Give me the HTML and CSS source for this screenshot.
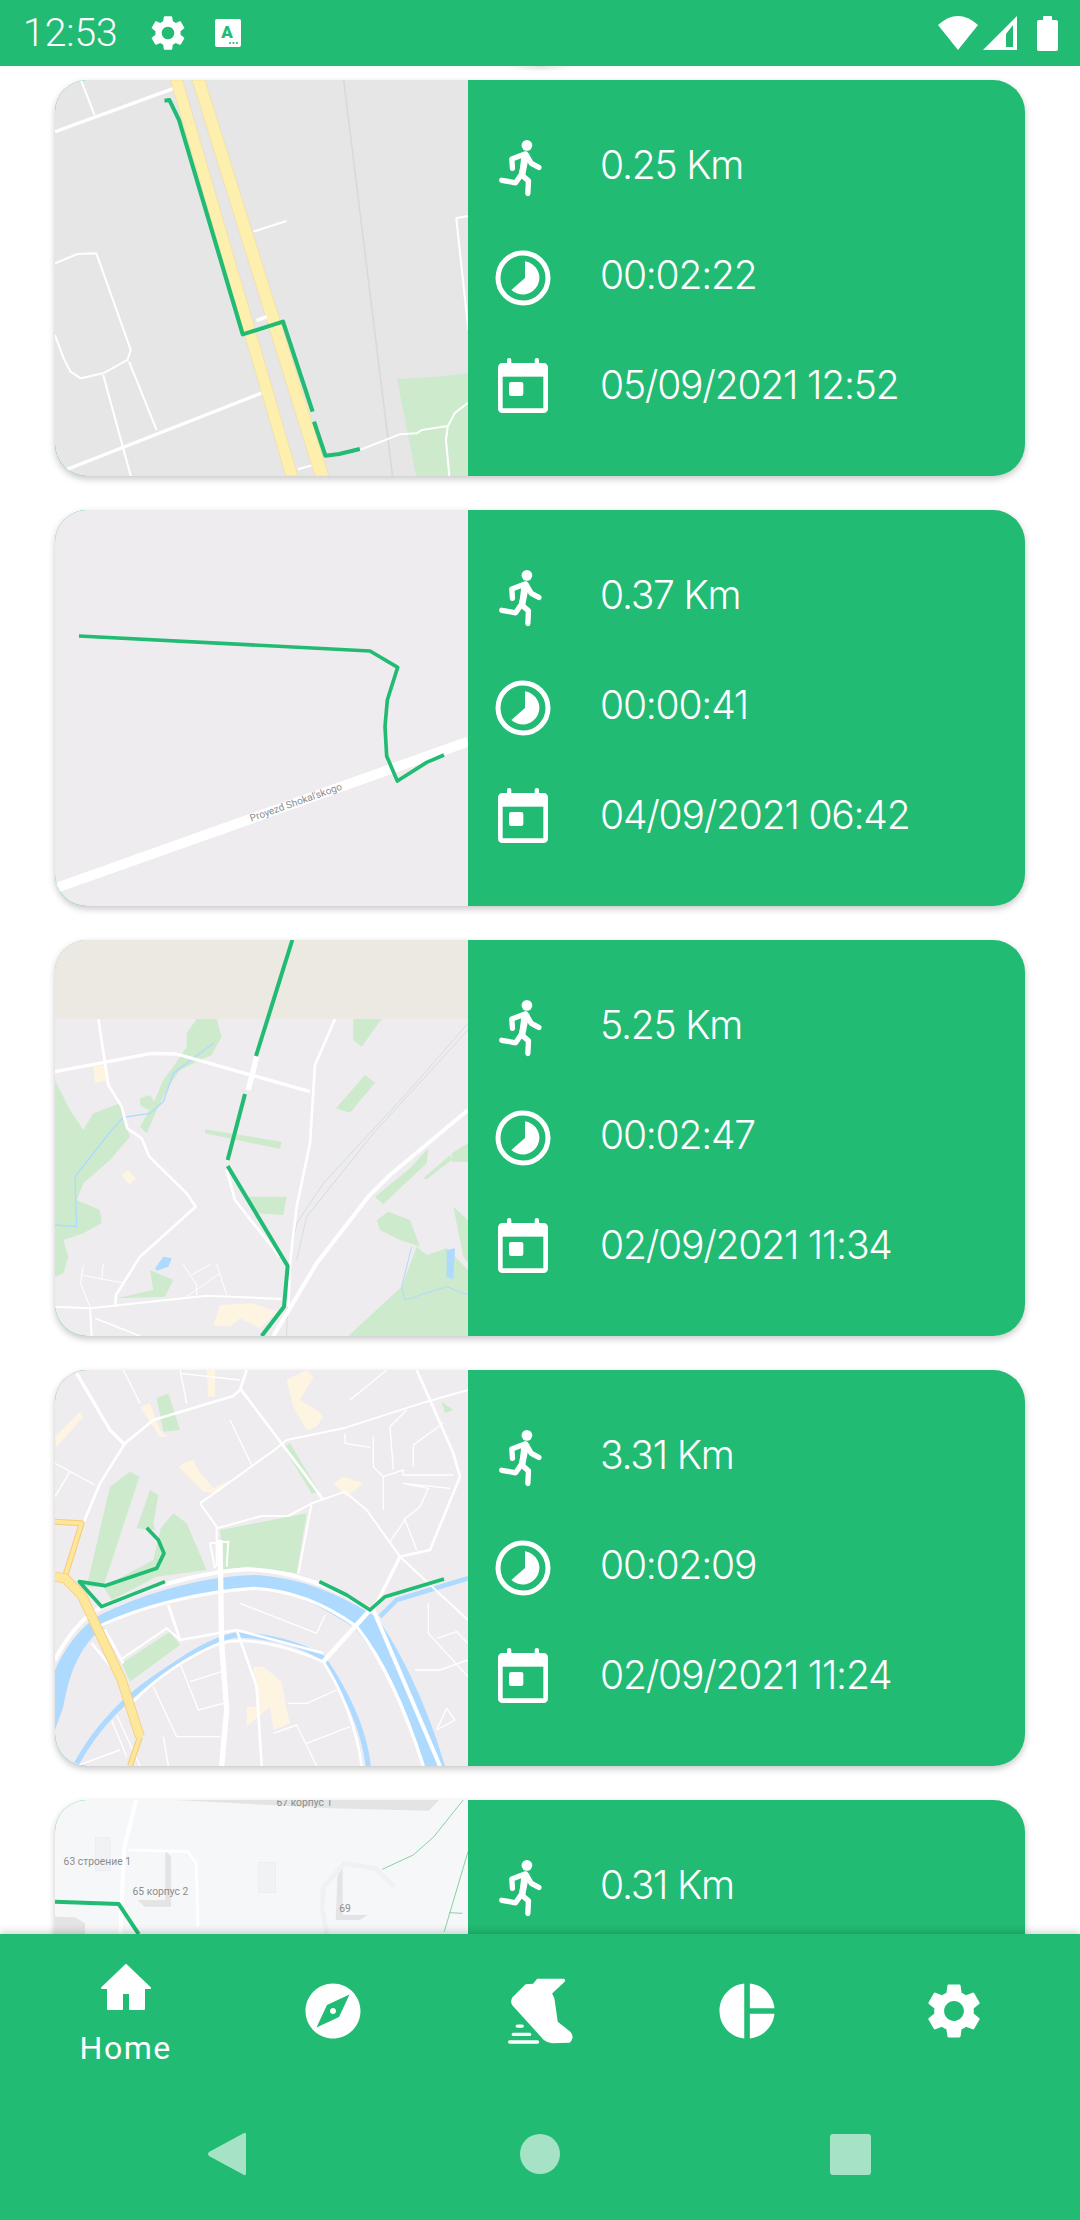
FILE: index.html
```html
<!DOCTYPE html>
<html>

<head>
    <meta charset="UTF-8">
    <title>Runs</title>
    <link rel="stylesheet" href="styles.css">
</head>

<body>
    <svg class="sprite" width="0" height="0">
        <symbol id="i-run" viewBox="50 50 140 190">
            <circle cx="142" cy="73" r="17" fill="#fff" />
            <path d="M96 146 L94 116 L138 100 L156 130 L180 143 M138 104 L124 166 L147 186 L145 226 M124 166 L106 192 L62 184" fill="none" stroke="#fff" stroke-width="17" stroke-linecap="round" stroke-linejoin="round" />
            <path d="M125 100 L150 100 L136 172 L118 165 Z" fill="#fff" />
        </symbol>
        <symbol id="i-clock" viewBox="0 0 168 168">
            <circle cx="84" cy="84" r="75" fill="none" stroke="#fff" stroke-width="15" />
            <path d="M90 34 A50 50 0 1 1 49 120 L90 84 Z" fill="#fff" />
        </symbol>
        <symbol id="i-cal" viewBox="0 0 150 165">
            <rect x="7" y="22" width="136" height="136" rx="6" fill="none" stroke="#fff" stroke-width="14" />
            <rect x="7" y="20" width="136" height="36" fill="#fff" />
            <rect x="27" y="0" width="13" height="24" rx="6" fill="#fff" />
            <rect x="110" y="0" width="13" height="24" rx="6" fill="#fff" />
            <rect x="33" y="72" width="43" height="42" rx="7" fill="#fff" />
        </symbol>
        <symbol id="i-gear" viewBox="0 0 24 24">
            <path fill="#fff" d="M19.14 12.94c.04-.3.06-.61.06-.94 0-.32-.02-.64-.07-.94l2.03-1.58c.18-.14.23-.41.12-.61l-1.92-3.32c-.12-.22-.37-.29-.59-.22l-2.39.96c-.5-.38-1.03-.7-1.62-.94l-.36-2.54c-.04-.24-.24-.41-.48-.41h-3.84c-.24 0-.43.17-.47.41l-.36 2.54c-.59.24-1.13.57-1.62.94l-2.39-.96c-.22-.08-.47 0-.59.22L2.74 8.87c-.12.21-.08.47.12.61l2.03 1.58c-.05.3-.09.63-.09.94s.02.64.07.94l-2.03 1.58c-.18.14-.23.41-.12.61l1.92 3.32c.12.22.37.29.59.22l2.39-.96c.5.38 1.03.7 1.62.94l.36 2.54c.05.24.24.41.48.41h3.84c.24 0 .44-.17.47-.41l.36-2.54c.59-.24 1.13-.56 1.62-.94l2.39.96c.22.08.47 0 .59-.22l1.92-3.32c.12-.22.07-.47-.12-.61l-2.01-1.58zM12 15.6c-1.98 0-3.6-1.62-3.6-3.6s1.62-3.6 3.6-3.6 3.6 1.62 3.6 3.6-1.62 3.6-3.6 3.6z" />
        </symbol>
    </svg>

    <div class="phone">
        <div class="statusbar">
            <span class="clock">12:53</span>
            <svg class="st-gear"><use href="#i-gear" /></svg>
            <svg class="st-kbd" viewBox="0 0 26 28">
                <rect width="26" height="28" rx="2" fill="#fff" />
                <text class="kbd-a" x="12" y="19">A</text>
                <circle cx="15" cy="24" r="1.1" fill="#22bb73" />
                <circle cx="18.5" cy="24" r="1.1" fill="#22bb73" />
                <circle cx="22" cy="24" r="1.1" fill="#22bb73" />
            </svg>
            <div class="st-right">
                <svg class="st-wifi" viewBox="0 0 40 34"><path d="M20 34 L0 9 Q20 -9 40 9 Z" fill="#fff" /></svg>
                <svg class="st-signal" viewBox="0 0 34 34"><path fill-rule="evenodd" d="M0 34 L34 0 L34 34 Z M23 18 L30 9 L30 31 L23 31 Z" fill="#fff" /></svg>
                <svg class="st-batt" viewBox="0 0 21 35"><path d="M6 4 V1 Q6 0 7 0 H14 Q15 0 15 1 V4 H19 Q21 4 21 6 V33 Q21 35 19 35 H2 Q0 35 0 33 V6 Q0 4 2 4 Z" fill="#fff" /></svg>
            </div>
        </div>

        <div class="list">
            <div class="card">
                <svg class="map map-grey" viewBox="160 240 1199 1188" preserveAspectRatio="none">
                    <polygon class="park" points="1153,1137 1270,1130 1359,1120 1359,1428 1208,1428" />
                    <polyline class="rail w5" points="998,240 1140,1428" />
                    <polyline class="rd w6" points="235,240 275,345" />
                    <polyline class="rd w10" points="160,395 505,265" />
                    <polyline class="rd w6" points="160,790 225,762 280,760 380,1050 370,1080 300,1120 235,1135 205,1115 185,1075 160,1005" />
                    <polyline class="rd w6" points="375,1085 455,1290" />
                    <polyline class="rd w6" points="300,1125 380,1428" />
                    <polyline class="rd w10" points="190,1410 770,1175" />
                    <polyline class="rd w6" points="735,695 832,663" />
                    <polyline class="rd w6" points="1359,648 1325,655 1360,990" />
                    <polyline class="rd w6" points="865,1408 910,1395" />
                    <polyline class="rd w6" points="1045,1350 1160,1303 1210,1300 1225,1290 1300,1278" />
                    <polyline class="rd w6" points="1359,1208 1320,1240 1300,1280 1295,1320 1305,1428" />
                    <polygon class="hw" points="495,240 530,240 865,1428 830,1428" />
                    <polygon class="hw" points="558,240 595,240 955,1428 915,1428" />
                    <polyline class="rd w10" points="745,962 775,950" />
                    <polyline class="route w12" points="478,302 492,300 520,360 705,1003 822,965 908,1235" />
                    <polyline class="route w12" points="912,1265 945,1367 985,1362 1045,1347" />
                </svg>
                <div class="info">
                    <div class="row"><svg class="ic ic-run"><use href="#i-run" /></svg><span class="val">0.25 Km</span></div>
                    <div class="row"><svg class="ic ic-clock"><use href="#i-clock" /></svg><span class="val">00:02:22</span></div>
                    <div class="row"><svg class="ic ic-cal"><use href="#i-cal" /></svg><span class="val">05/09/2021 12:52</span></div>
                </div>
            </div>

            <div class="card">
                <svg class="map" viewBox="45 30 1239 1188">
                    <polyline class="rd w30 blur" points="45,1165 1284,725" />
                    <text class="map-label" transform="translate(634 965) rotate(-19.5)">Proyezd Shokal'skogo</text>
                    <polyline class="route w11" points="117,408 990,453 1073,502 1042,600 1035,680 1040,768 1072,843 1160,787 1212,765" />
                </svg>
                <div class="info">
                    <div class="row"><svg class="ic ic-run"><use href="#i-run" /></svg><span class="val">0.37 Km</span></div>
                    <div class="row"><svg class="ic ic-clock"><use href="#i-clock" /></svg><span class="val">00:00:41</span></div>
                    <div class="row"><svg class="ic ic-cal"><use href="#i-cal" /></svg><span class="val">04/09/2021 06:42</span></div>
                </div>
            </div>

            <div class="card">
                <svg class="map" viewBox="45 30 1239 1188">
                    <rect class="sand" x="45" y="30" width="1239" height="237" />
                    <polygon class="park" points="45,450 90,540 130,600 160,550 240,520 250,570 270,620 210,690 130,760 110,810 180,840 185,880 130,910 70,930 85,980 70,1030 45,1040" />
                    <polygon class="park" points="440,310 470,267 530,267 545,320 515,375 470,395 420,420 385,470 355,530 320,610 300,590 340,520 370,450 400,410 440,350" />
                    <polygon class="park" points="300,505 330,495 345,520 325,540 300,525" />
                    <polygon class="park" points="495,598 725,635 720,657 495,610" />
                    <polygon class="park" points="975,435 1005,458 930,548 888,535" />
                    <polygon class="park" points="940,267 1025,267 965,350 940,330" />
                    <polygon class="park" points="625,800 740,800 730,855 650,850" />
                    <polygon class="park" points="1284,640 1284,695 1235,695 1235,670" />
                    <polygon class="park" points="1150,745 1230,675 1235,690 1160,748" />
                    <polygon class="park" points="1005,800 1110,715 1165,655 1160,700 1030,822" />
                    <polygon class="park" points="925,1218 1085,1070 1130,950 1160,975 1220,955 1284,1020 1284,1218" />
                    <polygon class="park" points="1010,870 1045,845 1110,870 1140,950 1080,930 1020,900" />
                    <polygon class="park" points="1240,830 1284,870 1284,1000 1270,980" />
                    <polygon class="park" points="330,1020 400,1050 375,1100 230,1105 340,1080" />
                    <polygon class="water" points="1220,960 1245,955 1240,1048 1220,1040" />
                    <polygon class="water" points="345,1015 370,980 395,985 385,1010 350,1022" />
                    <polyline class="river w4" points="45,885 110,890 105,740 215,600 250,562 330,550 370,515 400,430 520,340" />
                    <polyline class="river w3" points="1115,950 1085,1070 1095,1110 1220,1070 1284,1095" />
                    <polygon class="tan" points="160,408 200,405 205,450 165,460" />
                    <polygon class="tan" points="245,735 265,720 288,745 268,765" />
                    <polygon class="tan" points="540,1125 640,1120 710,1145 660,1195 600,1165 570,1190 520,1185" />
                    <polyline class="rail w3" points="1284,280 1100,490 850,760 770,880 745,1010 740,1218" />
                    <polyline class="rail w3" points="1284,300 1000,610 800,860 770,990" />
                    <polyline class="rd w8" points="175,267 205,465 245,530 262,595 305,625 328,680 440,790 467,830 300,980 228,1095 225,1130" />
                    <polyline class="rd w10" points="45,425 335,370 410,372 810,485" />
                    <polyline class="rd w8" points="885,267 825,405 810,640 770,830 750,1000 745,1130" />
                    <polyline class="rd w12" points="1284,540 1050,735 985,800 830,1000 700,1218" />
                    <polyline class="rd w16" points="650,380 625,480" />
                    <polyline class="rd w8" points="560,720 585,810 640,880 720,980" />
                    <polyline class="rd w6" points="45,1130 150,1135 500,1097 725,1107" />
                    <polyline class="rd w6" points="150,1130 155,1218" />
                    <polyline class="rd w3" points="130,1005 122,1060 150,1130" />
                    <polyline class="rd w3" points="122,1035 245,1058" />
                    <polyline class="rd w3" points="190,1000 185,1048" />
                    <polyline class="rd w3" points="430,1003 470,1065 470,1095" />
                    <polyline class="rd w3" points="510,1003 455,1035" />
                    <polyline class="rd w3" points="530,1003 560,1095" />
                    <polyline class="rd w3" points="540,1030 440,1100" />
                    <polyline class="rd w5" points="165,1165 300,1218" />
                    <polyline class="route w12" points="757,30 648,378" />
                    <polyline class="route w12" points="615,492 563,690" />
                    <polyline class="route w12" points="563,708 743,1008 732,1130 665,1218" />
                </svg>
                <div class="info">
                    <div class="row"><svg class="ic ic-run"><use href="#i-run" /></svg><span class="val">5.25 Km</span></div>
                    <div class="row"><svg class="ic ic-clock"><use href="#i-clock" /></svg><span class="val">00:02:47</span></div>
                    <div class="row"><svg class="ic ic-cal"><use href="#i-cal" /></svg><span class="val">02/09/2021 11:34</span></div>
                </div>
            </div>

            <div class="card">
                <svg class="map" viewBox="45 30 1239 1188">
                    <polygon class="park" points="210,380 270,335 298,350 190,680 140,680" />
                    <polygon class="park" points="290,505 330,390 355,405 340,490 345,510" />
                    <polygon class="park" points="362,505 400,460 440,490 500,630 350,650 215,720 190,680 340,600" />
                    <polygon class="park" points="540,510 800,460 770,640 620,620 550,630" />
                    <polygon class="park" points="350,115 385,100 420,210 370,215" />
                    <polygon class="park" points="730,260 750,250 840,400 815,400" />
                    <polygon class="park" points="245,910 390,815 420,855 270,965" />
                    <polygon class="park" points="1205,125 1240,150 1215,160" />
                    <polygon class="tan" points="415,320 440,305 460,300 475,330 520,385 570,360 520,400 490,395" />
                    <polygon class="tan" points="880,370 910,350 970,370 920,410" />
                    <polygon class="tan" points="740,60 800,30 820,50 780,120 830,150 850,170 830,200 800,210 760,140" />
                    <polygon class="tan" points="300,140 330,130 360,210 380,230 360,230" />
                    <polygon class="tan" points="640,920 670,920 725,965 740,1050 750,1090 700,1110 690,1040 620,1100 620,1040 650,1040" />
                    <polygon class="tan" points="45,230 120,155 130,170 50,260" />
                    <polygon class="tan" points="500,30 525,30 525,110 505,110" />
                    <path class="water" d="M45 930 C80 850 140 780 200 755 C320 700 480 650 640 645 C780 650 900 705 990 760 L1010 770 C1080 870 1160 1030 1215 1218 L1150 1218 C1110 1090 1040 920 945 805 C860 750 760 690 640 685 C480 695 300 740 190 800 C120 860 90 930 70 1040 L45 1110 Z" />
                    <path class="river w16" d="M110 1210 C170 1100 260 1010 350 950 C440 890 500 845 585 825 C680 825 780 850 850 895 C920 1000 970 1100 985 1218" />
                    <polyline class="river w14" points="1020,770 1070,720 1284,655" />
                    <path class="rd w12" d="M45 900 C80 830 130 770 180 745 C300 690 480 635 620 628 C760 630 900 690 990 750" />
                    <path class="rd w10" d="M175 800 C300 740 480 695 640 685 C760 690 860 735 950 800 C1030 900 1100 1060 1150 1218" />
                    <path class="rd w8" d="M280 1025 C340 960 440 890 540 850 C620 830 720 850 850 905 C900 980 950 1100 965 1218" />
                    <polyline class="rd w10" points="110,40 210,210 255,255" />
                    <polyline class="rd w8" points="255,250 340,180 580,108 600,90 620,30" />
                    <polyline class="rd w8" points="255,250 180,370 130,490" />
                    <polyline class="rd w8" points="600,85 800,350 850,420" />
                    <polyline class="rd w6" points="480,430 710,265 740,240 910,205 1160,125 1284,90" />
                    <polyline class="rd w6" points="480,430 530,500 530,620" />
                    <polyline class="rd w6" points="530,505 665,468 745,468 815,430 915,395 980,450 1080,590 1284,780" />
                    <polyline class="rd w6" points="815,430 775,640" />
                    <polyline class="rd w16" points="540,540 545,850 560,1050 545,1218" />
                    <polyline class="rd w6" points="525,625 510,550 565,545 560,620" />
                    <polyline class="rd w14" points="990,750 850,905" />
                    <polyline class="rd w12" points="1000,750 1200,1218" />
                    <polyline class="rd w10" points="1080,590 1000,750" />
                    <polyline class="rd w8" points="1080,590 1170,570 1260,350 1240,280 1170,120 1130,30" />
                    <polyline class="rd w8" points="385,735 420,840 590,810 850,880" />
                    <polyline class="rd w6" points="240,900 380,805 420,840" />
                    <polyline class="rd w8" points="590,810 650,980 665,1218" />
                    <polyline class="rd w8" points="155,850 230,940" />
                    <polyline class="rd w8" points="195,810 250,910" />
                    <polyline class="rd w4" points="250,30 300,130" />
                    <polyline class="rd w4" points="420,30 440,130" />
                    <polyline class="rd w4" points="570,180 635,315" />
                    <polyline class="rd w4" points="45,310 165,375" />
                    <polyline class="rd w4" points="90,335 45,410" />
                    <polyline class="rd w4" points="420,40 600,60" />
                    <polyline class="rd w4" points="930,120 1040,30" />
                    <polyline class="rd w4" points="1000,230 1000,320 1030,350 1090,330 1090,345 1240,345" />
                    <polyline class="rd w4" points="915,220 915,250 990,262" />
                    <polyline class="rd w4" points="1030,350 1030,450" />
                    <polyline class="rd w4" points="1090,480 1140,440 1165,385 1090,370 1230,385" />
                    <polyline class="rd w4" points="1050,545 1095,480 1130,570" />
                    <polyline class="rd w4" points="1060,330 1050,200 1100,150" />
                    <polyline class="rd w4" points="1120,320 1120,255 1210,190" />
                    <polyline class="rd w4" points="1165,730 1165,820 1284,950" />
                    <polyline class="rd w4" points="1190,835 1250,815 1284,850" />
                    <polyline class="rd w4" points="1125,930 1200,930 1284,900" />
                    <polyline class="rd w4" points="1190,1110 1220,1045 1245,1080 1190,1110" />
                    <polyline class="rd w4" points="700,1120 770,1095 830,1218" />
                    <polyline class="rd w4" points="800,1150 930,1100" />
                    <polyline class="rd w4" points="745,1030 800,1030 890,990" />
                    <polyline class="rd w4" points="600,730 830,820 855,765" />
                    <polyline class="rd w4" points="420,910 475,1050 550,1030" />
                    <polyline class="rd w4" points="450,965 545,935" />
                    <polyline class="rd w4" points="340,980 410,1130 540,1130" />
                    <polyline class="rd w4" points="370,1130 385,1218" />
                    <polyline class="rd w4" points="215,1080 260,1190" />
                    <polyline class="rd w4" points="230,1065 300,1218" />
                    <polyline class="rd w4" points="110,1218 240,1170" />
                    <polyline class="hw-edge" points="45,485 125,490 75,650" />
                    <polyline class="hw-edge" points="300,1130 270,1218" />
                    <polyline class="hw-line" points="45,485 125,490 75,650" />
                    <polyline class="hw-line" points="300,1130 270,1218" />
                    <polyline class="hw-edge thick" points="45,650 75,655 125,705 245,960 300,1130" />
                    <polyline class="hw-line thick" points="45,650 75,655 125,705 245,960 300,1130" />
                    <polyline class="route w11" points="320,503 355,540 372,580 350,625 195,677 118,665 185,740 375,665" />
                    <polyline class="route w11" points="838,665 920,705 990,750 1035,710 1212,657" />
                </svg>
                <div class="info">
                    <div class="row"><svg class="ic ic-run"><use href="#i-run" /></svg><span class="val">3.31 Km</span></div>
                    <div class="row"><svg class="ic ic-clock"><use href="#i-clock" /></svg><span class="val">00:02:09</span></div>
                    <div class="row"><svg class="ic ic-cal"><use href="#i-cal" /></svg><span class="val">02/09/2021 11:24</span></div>
                </div>
            </div>

            <div class="card">
                <svg class="map map-pale" viewBox="160 60 1199 1188" preserveAspectRatio="none">
                    <polygon class="bld" points="510,60 1275,60 1245,92 960,85" />
                    <rect class="bld-pale" x="278" y="172" width="42" height="100" />
                    <rect class="bld-pale" x="750" y="248" width="50" height="90" />
                    <polygon class="bld" points="480,210 497,230 497,380 420,380 400,360 480,360" />
                    <polygon class="bld" points="995,255 980,290 975,420 1045,420 1068,405 995,405" />
                    <polygon class="bld" points="160,410 218,412 247,430 247,470 160,470" />
                    <polyline class="rd w12" points="395,60 360,210 350,470" />
                    <polyline class="rd w8" points="372,210 545,215 570,250 575,440" />
                    <polyline class="walk" points="1140,315 1090,265 1000,250 940,320 935,380 950,470" />
                    <polyline class="thin" points="1345,60 1260,170 1200,225 1110,268" />
                    <polyline class="thin" points="1359,215 1290,455" />
                    <polyline class="thin" points="1305,398 1343,400" />
                    <polyline class="route w12" points="160,365 345,372 403,462" />
                    <text class="map-label" x="803" y="78">67 корпус 1</text>
                    <text class="map-label" x="185" y="256">63 строение 1</text>
                    <text class="map-label" x="385" y="346">65 корпус 2</text>
                    <text class="map-label" x="985" y="395">69</text>
                </svg>
                <div class="info">
                    <div class="row"><svg class="ic ic-run"><use href="#i-run" /></svg><span class="val">0.31 Km</span></div>
                </div>
            </div>
        </div>

        <div class="bottom">
            <div class="tabs">
                <div class="tab tab-active">
                    <svg class="tab-home" viewBox="0 0 50 46"><path d="M25 1 L49 24 H43 V45 H29 V29 H21 V45 H7 V24 H1 Z" fill="#fff" stroke="#fff" stroke-width="2" stroke-linejoin="round" /></svg>
                    <span class="tab-label">Home</span>
                </div>
                <div class="tab">
                    <svg class="tab-ic" viewBox="0 0 24 24"><path fill="#fff" d="M12 10.9c-.61 0-1.1.49-1.1 1.1s.49 1.1 1.1 1.1c.61 0 1.1-.49 1.1-1.1s-.49-1.1-1.1-1.1zM12 2C6.48 2 2 6.48 2 12s4.48 10 10 10 10-4.48 10-10S17.52 2 12 2zm2.19 12.19L6 18l3.81-8.19L18 6l-3.81 8.19z" /></svg>
                </div>
                <div class="tab">
                    <svg class="tab-shoe" viewBox="80 50 200 205">
                        <path fill="#fff" d="M158 70 L170 55 H250 Q258 58 252 65 L215 100 L222 115 L232 185 L270 215 Q285 232 268 248 L215 250 Q200 248 190 240 L95 135 Q88 125 95 112 L135 72 Z" />
                        <rect x="105" y="193" width="25" height="10" rx="5" fill="#fff" />
                        <rect x="93" y="218" width="59" height="10" rx="5" fill="#fff" />
                        <rect x="82" y="241" width="94" height="10" rx="5" fill="#fff" />
                    </svg>
                </div>
                <div class="tab">
                    <svg class="tab-ic" viewBox="0 0 24 24"><path fill="#fff" d="M11 2v20c-5.07-.5-9-4.79-9-10s3.93-9.5 9-10zm2.03 0v8.99H22c-.47-4.74-4.24-8.52-8.97-8.99zm0 11.01V22c4.74-.47 8.5-4.25 8.97-8.99h-8.97z" /></svg>
                </div>
                <div class="tab">
                    <svg class="tab-ic"><use href="#i-gear" /></svg>
                </div>
            </div>
            <div class="sysnav">
                <svg class="sys-back" viewBox="0 0 46 44"><path d="M37 1 Q39 0 39 3 V41 Q39 44 37 43 L2 24 Q0 22 2 20 Z" /></svg>
                <div class="sys-home"></div>
                <div class="sys-recent"></div>
            </div>
        </div>
    </div>
</body>

</html>
```

FILE: styles.css
```css
body {
    margin: 0;
    background: #fff;
    font-family: "Inter", "Liberation Sans", sans-serif;
}

.sprite {
    display: block;
    height: 0;
}

.phone {
    width: 1080px;
    height: 2220px;
    display: flex;
    flex-direction: column;
    overflow: hidden;
}

/* status bar */
.statusbar {
    height: 66px;
    flex: none;
    background: #22bb73;
    display: flex;
    align-items: center;
    padding: 0 22px 0 23px;
    color: #fff;
}

.clock {
    font-family: "Roboto", sans-serif;
    font-size: 39px;
    font-weight: 300;
    width: 124px;
}

.st-gear {
    width: 42px;
    height: 42px;
}

.st-kbd {
    width: 26px;
    height: 28px;
    margin-left: 26px;
}

.kbd-a {
    font-family: "Roboto", sans-serif;
    font-size: 17px;
    font-weight: 900;
    fill: #22bb73;
    text-anchor: middle;
}

.st-right {
    margin-left: auto;
    display: flex;
    align-items: center;
}

.st-wifi {
    width: 40px;
    height: 34px;
}

.st-signal {
    width: 34px;
    height: 34px;
    margin-left: 5px;
}

.st-batt {
    width: 21px;
    height: 35px;
    margin-left: 20px;
}

/* run list */
.list {
    flex: 1;
    min-height: 0;
    position: relative;
    overflow: hidden;
    padding: 14px 55px 0;
    display: flex;
    flex-direction: column;
    gap: 34px;
}

.list::before {
    content: "";
    position: absolute;
    top: 0;
    left: 505px;
    width: 70px;
    height: 6px;
    background: radial-gradient(ellipse at top, rgba(0, 0, 0, .12), rgba(0, 0, 0, 0) 70%);
}

.card {
    height: 396px;
    flex: none;
    display: flex;
    border-radius: 32px;
    overflow: hidden;
    background: #22bb73;
    box-shadow: 0 3px 7px rgba(0, 0, 0, .22);
}

.map {
    width: 413px;
    height: 396px;
    flex: none;
    display: block;
    background: #efecf0;
}

.map-grey {
    background: #e6e6e6;
}

.map-pale {
    background: #f6f7f9;
}

.info {
    flex: 1;
    padding: 33px 0 33px 27px;
}

.row {
    height: 110px;
    display: flex;
    align-items: center;
}

.ic {
    flex: none;
}

.ic-run {
    width: 44px;
    height: 60px;
    margin: 0 58px 0 3px;
}

.ic-clock {
    width: 56px;
    height: 56px;
    margin-right: 49px;
}

.ic-cal {
    width: 50px;
    height: 55px;
    margin: 0 52px 6px 3px;
}

.val {
    color: #fff;
    font-size: 39px;
    font-weight: 300;
    letter-spacing: -1.2px;
    margin-bottom: 8px;
    white-space: nowrap;
}

/* map shapes */
.rd,
.route,
.rail,
.river,
.hw-edge,
.hw-line,
.walk,
.thin {
    fill: none;
    stroke-linejoin: round;
}

.rd {
    stroke: #fff;
}

.route {
    stroke: #22bb73;
}

.rail {
    stroke: #d6dcdb;
}

.river {
    stroke: #aedaff;
}

.blur {
    filter: blur(1px);
}

.w3 { stroke-width: 3; }
.w4 { stroke-width: 4; }
.w5 { stroke-width: 5; }
.w6 { stroke-width: 6; }
.w8 { stroke-width: 8; }
.w10 { stroke-width: 10; }
.w11 { stroke-width: 11; }
.w12 { stroke-width: 12; }
.w14 { stroke-width: 14; }
.w16 { stroke-width: 16; }
.w30 { stroke-width: 30; }

.park {
    fill: #cdeacc;
}

.water {
    fill: #aedaff;
}

.tan {
    fill: #fdf4e2;
}

.sand {
    fill: #ebe9e1;
}

.hw {
    fill: #fdefae;
    stroke: #f5cc7c;
    stroke-width: 1;
}

.hw-edge {
    stroke: #f7cd7e;
    stroke-width: 18;
}

.hw-line {
    stroke: #fde79a;
    stroke-width: 11;
}

.hw-edge.thick {
    stroke-width: 30;
}

.hw-line.thick {
    stroke-width: 25;
}

.bld {
    fill: #e4e4e4;
}

.bld-pale {
    fill: #f1f2f4;
    stroke: #e9eaec;
    stroke-width: 2;
}

.walk {
    stroke: #f0f1f3;
    stroke-width: 14;
    stroke-linecap: round;
}

.thin {
    stroke: #74c98f;
    stroke-width: 2.5;
}

.map-label {
    font-family: "Roboto", sans-serif;
    font-size: 30px;
    fill: #8c8c8c;
}

/* bottom navigation */
.bottom {
    height: 286px;
    flex: none;
    position: relative;
    z-index: 1;
    background: #22bb73;
    box-shadow: 0 -2px 8px rgba(0, 0, 0, .18);
    display: flex;
    flex-direction: column;
}

.tabs {
    height: 154px;
    display: flex;
    padding: 0 22px;
}

.tab {
    flex: 1;
    display: flex;
    flex-direction: column;
    align-items: center;
    justify-content: center;
}

.tab-active {
    padding-top: 8px;
}

.tab-ic {
    width: 66px;
    height: 66px;
}

.tab-home {
    width: 50px;
    height: 46px;
}

.tab-shoe {
    width: 67px;
    height: 68px;
}

.tab-label {
    color: #fff;
    font-family: "Roboto", sans-serif;
    font-size: 32px;
    letter-spacing: 1.5px;
    line-height: 38px;
    margin-top: 19px;
}

.sysnav {
    flex: 1;
    display: grid;
    grid-template-columns: repeat(3, 310px);
    justify-content: center;
    justify-items: center;
    align-items: center;
}

.sys-back {
    width: 46px;
    height: 44px;
    fill: #a6e3c6;
}

.sys-home {
    width: 40px;
    height: 40px;
    border-radius: 50%;
    background: #a6e3c6;
}

.sys-recent {
    width: 41px;
    height: 41px;
    border-radius: 3px;
    background: #a6e3c6;
}
```
